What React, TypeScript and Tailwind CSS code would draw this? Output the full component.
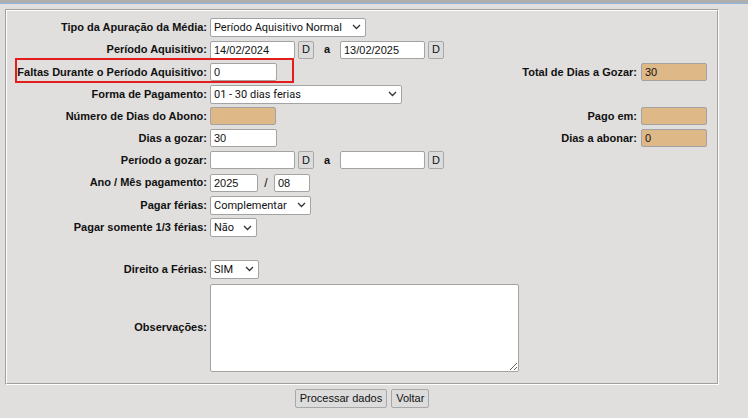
import React from 'react'

const inputCls =
  'h-[18px] rounded-[2px] border border-[#a3a3a3] bg-white px-[3px] text-[11px] text-[#111] outline-none'
const tanCls =
  'h-[18px] w-[66px] rounded-[2px] border border-[#a3a3a3] bg-[#deb887] px-[3px] text-[11px] text-[#111] outline-none'
const btnCls =
  'h-[18px] rounded-[2px] border border-[#a8a8a8] bg-[#dcdcdc] text-[11px] leading-none text-[#111]'

function Chevron() {
  return (
    <svg width="9" height="6" viewBox="0 0 9 6" className="pointer-events-none absolute right-[5px] top-1/2 -translate-y-1/2">
      <polyline points="1,1 4.5,4.5 8,1" fill="none" stroke="#333" strokeWidth="1.3" />
    </svg>
  )
}

function Select({ value, width }: { value: string; width: string }) {
  return (
    <div className={`relative ${width}`}>
      <select
        defaultValue={value}
        className="h-[19px] w-full appearance-none rounded-[2px] border border-[#a3a3a3] bg-white pl-[3px] pr-[14px] text-[11px] leading-none text-[#111] outline-none"
        style={{ fontFamily: 'Roboto, "Noto Sans", sans-serif' }}
      >
        <option>{value}</option>
      </select>
      <Chevron />
    </div>
  )
}

function Row({
  label,
  h,
  children,
  right,
  rightValue,
  extra,
}: {
  label?: string
  h: string
  children?: React.ReactNode
  right?: string
  rightValue?: string
  extra?: React.ReactNode
}) {
  return (
    <div className={`relative flex items-center pr-[10px] ${h}`}>
      <div className="w-[200px] text-right font-bold">{label}</div>
      <div className="ml-[3px] flex flex-1 items-center">{children}</div>
      {right && (
        <div className="flex items-center">
          <span className="font-bold">{right}</span>
          <input readOnly value={rightValue ?? ''} className={`ml-[4px] ${tanCls}`} />
        </div>
      )}
      {extra}
    </div>
  )
}

function DateRange({ from, to }: { from: string; to: string }) {
  return (
    <>
      <input readOnly value={from} className={`w-[85px] ${inputCls}`} />
      <button className={`ml-[3px] w-[16px] ${btnCls}`}>D</button>
      <span className="w-[26px] text-center font-bold">a</span>
      <input readOnly value={to} className={`w-[85px] ${inputCls}`} />
      <button className={`ml-[3px] w-[16px] ${btnCls}`}>D</button>
    </>
  )
}

export default function App() {
  return (
    <div
      className="min-h-[418px] bg-[#e0dfdd] text-[11px] text-[#111]"
      style={{ fontFamily: '"Liberation Sans", Arial, sans-serif' }}
    >
      <div className="h-[3px] bg-[#aeaeae]" />
      <div className="h-px bg-[#8fb6d9]" />

      <div className="ml-[5px] mt-[5px] w-[714px] border border-t-[#a0a0a0] border-l-[#a0a0a0] border-r-white border-b-white">
        <div className="border border-t-white border-l-white border-r-[#a0a0a0] border-b-[#a0a0a0] pt-[5px] pb-[8px]">
          <Row label="Tipo da Apuração da Média:" h="h-[22px]">
            <Select value="Período Aquisitivo Normal" width="w-[156px]" />
          </Row>
          <Row label="Período Aquisitivo:" h="h-[23px]">
            <DateRange from="14/02/2024" to="13/02/2025" />
          </Row>
          <Row
            label="Faltas Durante o Período Aquisitivo:"
            h="h-[22px]"
            right="Total de Dias a Gozar:"
            rightValue="30"
            extra={<div className="pointer-events-none absolute left-[8px] top-[-3px] h-[25px] w-[279px] border-2 border-[#e31c1c]" />}
          >
            <input readOnly value="0" className={`w-[67px] ${inputCls}`} />
          </Row>
          <Row label="Forma de Pagamento:" h="h-[22px]">
            <Select value="01 - 30 dias ferias" width="w-[192px]" />
          </Row>
          <Row label="Número de Dias do Abono:" h="h-[22px]" right="Pago em:" rightValue="">
            <input readOnly value="" className={tanCls} />
          </Row>
          <Row label="Dias a gozar:" h="h-[22px]" right="Dias a abonar:" rightValue="0">
            <input readOnly value="30" className={`w-[67px] ${inputCls}`} />
          </Row>
          <Row label="Período a gozar:" h="h-[22px]">
            <DateRange from="" to="" />
          </Row>
          <Row label="Ano / Mês pagamento:" h="h-[23px]">
            <input readOnly value="2025" className={`w-[48px] ${inputCls}`} />
            <span className="w-[16px] text-center text-[12px]">/</span>
            <input readOnly value="08" className={`w-[36px] ${inputCls}`} />
          </Row>
          <Row label="Pagar férias:" h="h-[22px]">
            <Select value="Complementar" width="w-[101px]" />
          </Row>
          <Row label="Pagar somente 1/3 férias:" h="h-[23px]">
            <Select value="Não" width="w-[47px]" />
          </Row>
          <div className="h-[19px]" />
          <Row label="Direito a Férias:" h="h-[22px]">
            <Select value="SIM" width="w-[49px]" />
          </Row>
          <Row label="Observações:" h="h-[95px]">
            <textarea className="h-[88px] w-[309px] rounded-[2px] border border-[#a3a3a3] bg-white" />
          </Row>
        </div>
      </div>

      <div className="mt-[4px] flex w-[724px] justify-center gap-[4px]">
        <button className={`h-[19px] px-[4px] ${btnCls}`}>Processar dados</button>
        <button className={`h-[19px] px-[4px] ${btnCls}`}>Voltar</button>
      </div>
    </div>
  )
}
